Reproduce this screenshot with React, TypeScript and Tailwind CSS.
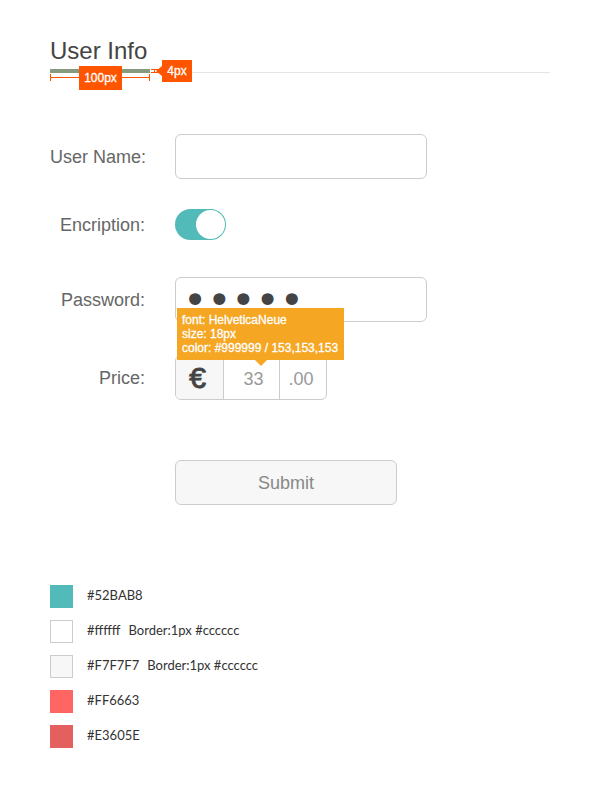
import React from "react";

const swatches = [
  { name: "#52BAB8", note: "", style: "bg-[#52bab8]" },
  { name: "#ffffff", note: "Border:1px #cccccc", style: "bg-white border border-[#cccccc]" },
  { name: "#F7F7F7", note: "Border:1px #cccccc", style: "bg-[#f7f7f7] border border-[#cccccc]" },
  { name: "#FF6663", note: "", style: "bg-[#ff6663]" },
  { name: "#E3605E", note: "", style: "bg-[#e3605e]" },
];

const label = "w-[95px] shrink-0 whitespace-nowrap text-right text-lg text-[#666666]";

function Header() {
  return (
    <header className="relative border-b border-[#e5e5e5] pb-px">
      <h1 className="pb-1 text-2xl leading-8 text-[#444444]">User Info</h1>
      <div className="absolute -bottom-px left-0 h-1 w-[100px] bg-[#869a7f]" />
      {/* width measurement */}
      <div className="absolute top-full left-0 mt-[2px] flex h-[7px] w-[100px] items-center border-x border-[#ff5500]">
        <div className="h-px w-full bg-[#ff5500]" />
      </div>
      <div className="absolute top-full left-[29px] -mt-[6px] h-6 w-[43px] bg-[#ff5500] text-center text-xs leading-6 text-white [-webkit-text-stroke:0.3px_white]">
        100px
      </div>
      {/* height measurement */}
      <svg className="absolute top-full left-[101px] -mt-[6px]" width="12" height="12" viewBox="0 0 12 12" aria-hidden="true">
        <rect x="0" y="3" width="7" height="4" fill="white" />
        <path d="M0 3.5H7M0 6.5H7M3.5 3V7" stroke="#ff5500" fill="none" />
        <path d="M5 5L11 0V10Z" fill="#ff5500" />
      </svg>
      <div className="absolute top-full left-[112px] -mt-3 h-[22px] w-[30px] bg-[#ff5500] text-center text-xs leading-[22px] text-white [-webkit-text-stroke:0.3px_white]">
        4px
      </div>
    </header>
  );
}

export default function App() {
  return (
    <main className="bg-white px-[50px] pt-[35px] pb-12 font-['Liberation_Sans',Arial,sans-serif]">
      <Header />
      <form className="mt-[61px]" onSubmit={(e) => e.preventDefault()}>
        <div className="flex items-center gap-[30px]">
          <label htmlFor="username" className={label}>User Name:</label>
          <input id="username" type="text" className="h-[45px] w-full max-w-[252px] rounded-md border border-[#cccccc] px-3 text-lg text-[#444444] outline-none" />
        </div>
        <div className="mt-[30px] flex items-center gap-[30px]">
          <label htmlFor="encryption" className={label}>Encription:</label>
          <input
            id="encryption"
            type="checkbox"
            role="switch"
            defaultChecked
            className="flex h-[31px] w-[51px] appearance-none items-center rounded-full bg-[#52bab8] px-px before:size-[29px] before:rounded-full before:bg-white checked:justify-end"
          />
        </div>
        <div className="mt-[37px] flex items-center gap-[30px]">
          <label htmlFor="password" className={label}>Password:</label>
          <input
            id="password"
            type="password"
            defaultValue="12345"
            className="h-[45px] w-full max-w-[252px] rounded-md border border-[#cccccc] px-[7px] font-['DejaVu_Sans',sans-serif] text-[41px] leading-[43px] text-[#444444] outline-none"
          />
        </div>
        <div className="mt-[33px] flex items-center gap-[30px]">
          <label htmlFor="price" className={label}>Price:</label>
          <div className="relative flex h-[45px] w-[152px] rounded-md border border-[#cccccc] text-lg text-[#999999]">
            <span className="flex w-12 items-center justify-center rounded-l-[5px] border-r border-[#cccccc] bg-[#f7f7f7] pr-1 text-3xl text-[#444444] [-webkit-text-stroke:1px_#444444]">€</span>
            <input id="price" type="text" defaultValue="33" className="h-full w-14 border-r border-[#cccccc] pt-1 pl-1 text-center outline-none" />
            <span className="flex flex-1 items-center justify-center pt-[2px] pr-1">.00</span>
            <div className="absolute bottom-[39px] left-px h-[52px] w-[167px] bg-[#f5a623] py-[5px] pl-[5px] text-xs leading-[14px] whitespace-nowrap text-white [-webkit-text-stroke:0.3px_white]">
              <p>font: HelveticaNeue</p>
              <p>size: 18px</p>
              <p>color: #999999 / 153,153,153</p>
              <svg className="absolute top-full left-[78px]" width="12" height="6" viewBox="0 0 12 6" aria-hidden="true">
                <path d="M0 0H12L6 6Z" fill="#f5a623" />
              </svg>
            </div>
          </div>
        </div>
        <div className="mt-[60px] pl-[125px]">
          <button type="submit" className="h-[45px] w-full max-w-[222px] rounded-md border border-[#cccccc] bg-[#f7f7f7] text-lg text-[#888888]">Submit</button>
        </div>
      </form>
      <ul className="mt-20 flex flex-col gap-3 font-['Lato',sans-serif] text-[13px] leading-5 text-[#333333]">
        {swatches.map((s) => (
          <li key={s.name} className="flex gap-[14px]">
            <span className={`size-[23px] ${s.style}`} />
            <span className="flex gap-2">
              <span>{s.name}</span>
              {s.note && <span>{s.note}</span>}
            </span>
          </li>
        ))}
      </ul>
    </main>
  );
}
